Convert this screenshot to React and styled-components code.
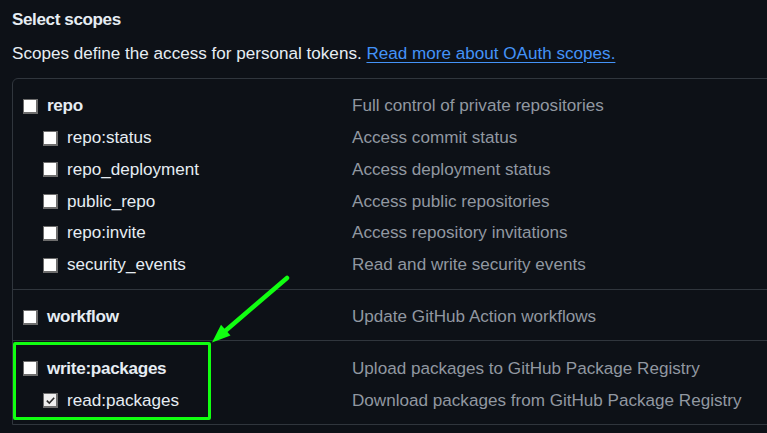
import React from "react";
import styled, { createGlobalStyle } from "styled-components";

const GlobalStyle = createGlobalStyle`
  html, body {
    margin: 0;
    padding: 0;
    background: #0d1117;
  }
  body {
    font-family: "Liberation Sans", Arial, sans-serif;
    color: #e6edf3;
    overflow: hidden;
  }
`;

const scopes = [
  {
    name: "repo",
    description: "Full control of private repositories",
    children: [
      { name: "repo:status", description: "Access commit status" },
      { name: "repo_deployment", description: "Access deployment status" },
      { name: "public_repo", description: "Access public repositories" },
      { name: "repo:invite", description: "Access repository invitations" },
      { name: "security_events", description: "Read and write security events" },
    ],
  },
  {
    name: "workflow",
    description: "Update GitHub Action workflows",
    children: [],
  },
  {
    name: "write:packages",
    description: "Upload packages to GitHub Package Registry",
    children: [
      {
        name: "read:packages",
        description: "Download packages from GitHub Package Registry",
        checked: true,
      },
    ],
  },
];

const CheckBox = ({ checked }) => (
  <Box $checked={checked}>
    {checked && (
      <svg width="11" height="11" viewBox="0 0 11 11">
        <path
          d="M1.8 5.6 L4.3 8 L9.2 2.8"
          fill="none"
          stroke="#2b2b2b"
          strokeWidth="1.6"
        />
      </svg>
    )}
  </Box>
);

const ScopeRow = ({ scope, nested }) => (
  <Row>
    <Label $nested={nested}>
      <CheckBox checked={scope.checked} />
      <Name $bold={!nested}>{scope.name}</Name>
    </Label>
    <Description>{scope.description}</Description>
  </Row>
);

export default function App() {
  return (
    <Page>
      <GlobalStyle />
      <Heading>Select scopes</Heading>
      <Intro>
        Scopes define the access for personal tokens.{" "}
        <a href="#scopes">Read more about OAuth scopes.</a>
      </Intro>
      <Panel>
        {scopes.map((scope) => (
          <Group key={scope.name}>
            <ScopeRow scope={scope} />
            {scope.children.map((child) => (
              <ScopeRow key={child.name} scope={child} nested />
            ))}
          </Group>
        ))}
      </Panel>

      {/* annotation drawn over the screenshot */}
      <Highlight />
      <Arrow width="767" height="433" viewBox="0 0 767 433">
        <line
          x1="287"
          y1="278"
          x2="224"
          y2="332"
          stroke="#11ff11"
          strokeWidth="4.5"
          strokeLinecap="round"
        />
        <polygon points="212,342.5 230.5,335.5 221,324.8" fill="#11ff11" />
      </Arrow>
    </Page>
  );
}

const Page = styled.div`
  position: relative;
  width: 767px;
  height: 433px;
  padding: 8px 0 0 12px;
  box-sizing: border-box;
  overflow: hidden;
`;

const Heading = styled.h3`
  margin: 0;
  font-size: 17.1px;
  line-height: 24px;
  font-weight: 700;
  letter-spacing: -0.4px;
`;

const Intro = styled.p`
  margin: 10px 0 12px;
  font-size: 17.1px;
  line-height: 24px;

  a {
    color: #4493f8;
    text-decoration: underline;
    text-underline-offset: 3px;
  }
`;

const Panel = styled.div`
  margin-right: -40px;
  border: 1px solid #30363d;
  border-top-left-radius: 6px;
`;

const Group = styled.div`
  padding: 11.6px 0 7.5px;

  & + & {
    border-top: 1px solid #30363d;
  }
`;

const Row = styled.div`
  display: grid;
  grid-template-columns: 339px 1fr;
  align-items: center;
  height: 31.75px;
  font-size: 17.1px;
  line-height: 24px;
`;

const Label = styled.label`
  display: flex;
  align-items: center;
  gap: 9px;
  padding-left: ${(p) => (p.$nested ? "30px" : "10px")};
`;

const Box = styled.span`
  display: inline-flex;
  align-items: center;
  justify-content: center;
  box-sizing: border-box;
  width: 15px;
  height: 15px;
  flex: none;
  background: ${(p) => (p.$checked ? "#efefef" : "#ffffff")};
  border: 2px solid #6d6d6d;
  border-top-width: 1px;
  border-left-width: 1px;
`;

const Name = styled.span`
  font-weight: ${(p) => (p.$bold ? 700 : 400)};
  letter-spacing: ${(p) => (p.$bold ? "-0.3px" : "0")};
  white-space: nowrap;
`;

const Description = styled.span`
  color: #9198a1;
  white-space: nowrap;
`;

const Highlight = styled.div`
  position: absolute;
  left: 12.5px;
  top: 342px;
  width: 198.5px;
  height: 78px;
  box-sizing: border-box;
  border: 3px solid #11ff11;
  border-radius: 2px;
  pointer-events: none;
`;

const Arrow = styled.svg`
  position: absolute;
  left: 0;
  top: 0;
  pointer-events: none;
`;
